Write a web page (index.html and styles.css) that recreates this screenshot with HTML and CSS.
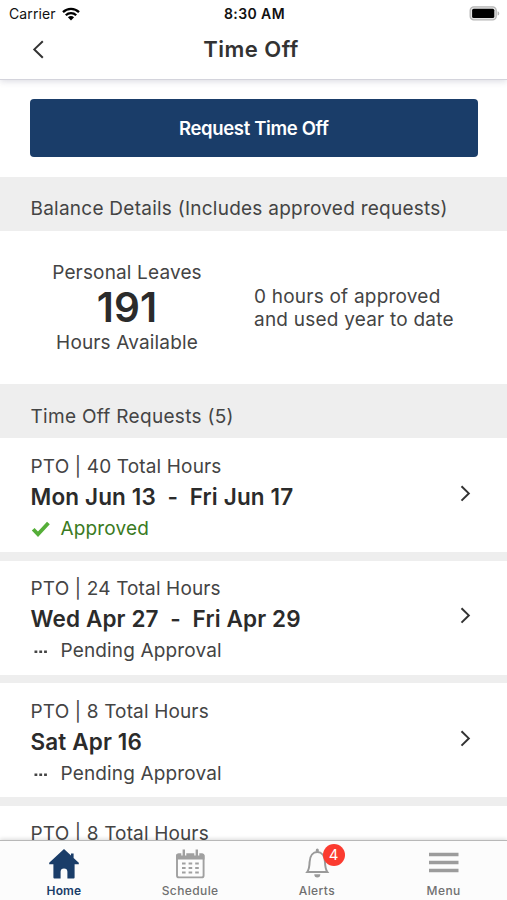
FILE: index.html
```html
<!DOCTYPE html>
<html lang="en">
<head>
    <meta charset="UTF-8">
    <meta name="viewport" content="width=device-width, initial-scale=1.0">
    <title>Time Off</title>
    <link rel="stylesheet" href="styles.css">
</head>
<body>
    <header>
        <div class="status-bar">
            <div class="carrier">
                <span>Carrier</span>
                <svg width="18" height="14" viewBox="0 0 18 14">
                    <path d="M1 5.2a11.5 11.5 0 0 1 16 0M3.8 8.2a7.4 7.4 0 0 1 10.4 0" fill="none" stroke="#000" stroke-width="2.3"/>
                    <path d="M5.9 10.3a4.6 4.6 0 0 1 6.2 0L9 13.6z"/>
                </svg>
            </div>
            <span class="time">8:30 AM</span>
            <svg class="battery" width="31" height="15" viewBox="0 0 31 15">
                <rect x="1.2" y="0.8" width="26" height="13" rx="3.6" fill="#e4e4e4" stroke="#b5b5b5" stroke-width="1.3"/>
                <rect x="3.1" y="2.7" width="22.2" height="9.4" rx="1.6"/>
                <path d="M28.6 5.2v4.4q1.7-.5 1.7-2.2t-1.7-2.2z" fill="#b5b5b5"/>
            </svg>
        </div>
        <div class="title-bar">
            <svg class="back" width="12" height="19" viewBox="0 0 12 19">
                <path d="M10.8 1.2L2.3 9.4l8.5 8.4" fill="none" stroke="#333" stroke-width="2"/>
            </svg>
            <h1>Time Off</h1>
        </div>
    </header>

    <main>
        <div class="actions">
            <button class="request">Request Time Off</button>
        </div>

        <h2>Balance Details (Includes approved requests)</h2>
        <div class="balance">
            <div class="available">
                <p>Personal Leaves</p>
                <strong>191</strong>
                <p>Hours Available</p>
            </div>
            <p class="used">0 hours of approved<br>and used year to date</p>
        </div>

        <h2 class="requests-title">Time Off Requests (5)</h2>
        <div class="item">
            <div>
                <p class="type">PTO | 40 Total Hours</p>
                <p class="dates">Mon Jun 13&nbsp; -&nbsp; Fri Jun 17</p>
                <p class="status approved">
                    <svg width="20" height="16" viewBox="0 0 20 16"><path d="M2.2 8.2l4.8 5L17.4 2" fill="none" stroke="#55ae38" stroke-width="3.8"/></svg>
                    <span>Approved</span>
                </p>
            </div>
            <svg class="arrow" width="11" height="17" viewBox="0 0 11 17"><path d="M1.5 1.2l7.3 7.2-7.3 7.2" fill="none" stroke="#333" stroke-width="2"/></svg>
        </div>
        <div class="item">
            <div>
                <p class="type">PTO | 24 Total Hours</p>
                <p class="dates">Wed Apr 27&nbsp; -&nbsp; Fri Apr 29</p>
                <p class="status">
                    <svg width="20" height="16" viewBox="0 0 20 16"><path d="M3.500 7.500h2.800v2.600H3.500zm4.800 0h2.800v2.600H8.300zm4.800 0h2.800v2.600h-2.800z" fill="#444"/></svg>
                    <span>Pending Approval</span>
                </p>
            </div>
            <svg class="arrow" width="11" height="17" viewBox="0 0 11 17"><path d="M1.5 1.2l7.3 7.2-7.3 7.2" fill="none" stroke="#333" stroke-width="2"/></svg>
        </div>
        <div class="item">
            <div>
                <p class="type">PTO | 8 Total Hours</p>
                <p class="dates">Sat Apr 16</p>
                <p class="status">
                    <svg width="20" height="16" viewBox="0 0 20 16"><path d="M3.500 7.500h2.800v2.600H3.500zm4.800 0h2.800v2.600H8.300zm4.800 0h2.800v2.600h-2.800z" fill="#444"/></svg>
                    <span>Pending Approval</span>
                </p>
            </div>
            <svg class="arrow" width="11" height="17" viewBox="0 0 11 17"><path d="M1.5 1.2l7.3 7.2-7.3 7.2" fill="none" stroke="#333" stroke-width="2"/></svg>
        </div>
        <div class="item">
            <p class="type">PTO | 8 Total Hours</p>
        </div>
    </main>

    <nav>
        <a class="tab active">
            <svg width="32" height="32" viewBox="0 0 32 32">
                <path d="M16 1L1.200 14.800V16.200h4.200v13.300q0 1 1 1h6.200v-6.700a3.400 3.400 0 0 1 6.800 0v6.700h6.200q1 0 1-1V16.200h4.200v-1.400l-5.200-4.800V5.500h-2.600v2.100z" fill="#1a3d69"/>
            </svg>
            <span>Home</span>
        </a>
        <a class="tab">
            <svg width="32" height="32" viewBox="0 0 32 32">
                <rect x="3" y="6.5" width="26.600" height="22.900" rx="2" fill="#fcfcfc" stroke="#a0a0a0" stroke-width="1.900"/>
                <path d="M2.100 11.500V7.500q0-2 2-2h24.400q2 0 2 2v4z" fill="#a0a0a0"/>
                <path d="M9.800 1v6.500M22.800 1v6.500" stroke="#fcfcfc" stroke-width="5"/>
                <path d="M9.800 1.500v6.500M22.800 1.500v6.500" stroke="#a0a0a0" stroke-width="2.400"/>
                <path d="M8 15.500h17M8 20h17M8 24.500h17" stroke="#a0a0a0" stroke-width="2.200" stroke-dasharray="3.600 3"/>
            </svg>
            <span>Schedule</span>
        </a>
        <a class="tab">
            <svg width="32" height="32" viewBox="0 0 32 32">
                <path d="M6.200 24h20.200q-2.200-3-2.400-10C23.700 7.500 20.500 4 16.300 4S8.900 7.500 8.600 14q-.200 7-2.400 10z" fill="#fcfcfc" stroke="#9a9a9a" stroke-width="2"/>
                <path d="M14.800 3.800V2a1.500 1.500 0 0 1 3 0v1.800zM13.300 26.200h6q0 3.200-3 3.200t-3-3.200z" fill="#9a9a9a"/>
            </svg>
            <span>Alerts</span>
            <b class="badge">4</b>
        </a>
        <a class="tab">
            <svg width="32" height="32" viewBox="0 0 32 32">
                <path d="M1 6.500h29.500M1 14.500h29.500M1 22.500h29.500" stroke="#9c9c9c" stroke-width="3.600"/>
            </svg>
            <span>Menu</span>
        </a>
    </nav>
</body>
</html>
```

FILE: styles.css
```css
* {
    box-sizing: border-box;
}
body {
    margin: 0;
    height: 900px;
    display: flex;
    flex-direction: column;
    overflow: hidden;
    font-family: Inter, "Liberation Sans", sans-serif;
    font-size: 19px;
    letter-spacing: 0.15px;
    color: #444;
    background: #fff;
}
h1, h2, p {
    margin: 0;
    font-weight: 400;
    white-space: nowrap;
}
svg {
    display: block;
    flex: none;
}
header {
    height: 80px;
    flex: none;
    background: #fff;
    border-bottom: 1px solid #d4d4dc;
    box-shadow: 0 2px 6px rgba(60, 60, 100, 0.16);
    z-index: 1;
}
.status-bar {
    display: grid;
    grid-template-columns: 1fr auto 1fr;
    align-items: center;
    height: 27px;
    padding: 0 7px 0 9px;
    font-size: 14px;
    color: #111;
}
.carrier {
    display: flex;
    align-items: center;
    gap: 6px;
    letter-spacing: 0.1px;
}
.time {
    font-weight: 600;
    letter-spacing: 0.4px;
}
.battery {
    justify-self: end;
}
.title-bar {
    display: grid;
    grid-template-columns: 1fr auto 1fr;
    align-items: center;
    height: 44px;
    padding: 0 37px 0 32px;
}
h1 {
    font-size: 22px;
    line-height: 30px;
    font-weight: 600;
    color: #333;
    letter-spacing: 0.5px;
}
main {
    flex: 1;
    min-height: 0;
    overflow: hidden;
    display: flex;
    flex-direction: column;
    background: #eee;
}
.actions {
    flex: none;
    display: flex;
    height: 97px;
    padding: 18.5px 29.5px 20px 30px;
    background: #fff;
}
.request {
    flex: 1;
    border: none;
    border-radius: 4px;
    background: #1a3d69;
    color: #fff;
    font-family: inherit;
    font-size: 18.5px;
    font-weight: 600;
    letter-spacing: -0.35px;
}
h2 {
    flex: none;
    height: 54px;
    padding: 5px 30px 0 30.5px;
    line-height: 54px;
    font-size: 19px;
    letter-spacing: 0.25px;
}
.requests-title {
    padding-top: 6px;
    letter-spacing: 0.3px;
}
.balance {
    flex: none;
    display: flex;
    align-items: center;
    height: 153px;
    background: #fff;
}
.available {
    width: 254px;
    text-align: center;
}
.available p {
    line-height: 24px;
}
.available strong {
    display: block;
    font-size: 40.5px;
    line-height: 46px;
    font-weight: 600;
    color: #2b2b2b;
}
.used {
    line-height: 23px;
    letter-spacing: 0.22px;
}
.item {
    flex: none;
    display: flex;
    justify-content: space-between;
    align-items: flex-start;
    height: 114px;
    margin-bottom: 8.5px;
    padding: 12.5px 36px 0 30.5px;
    background: #fff;
    line-height: 31px;
}
.arrow {
    margin-top: 34px;
}
.dates {
    font-size: 22.5px;
    line-height: 30px;
    font-weight: 600;
    letter-spacing: 0.14px;
    color: #2b2b2b;
}
.status {
    display: flex;
    align-items: center;
    gap: 10px;
    line-height: 34px;
}
.approved {
    color: #3a7a22;
}
nav {
    flex: none;
    display: grid;
    grid-template-columns: repeat(4, 1fr);
    height: 60px;
    border-top: 1px solid #b8b8b8;
    box-shadow: 0 -1px 4px rgba(0, 0, 0, 0.15);
    background: #fcfcfc;
    z-index: 1;
}
.tab {
    position: relative;
    display: flex;
    flex-direction: column;
    align-items: center;
    padding-top: 7px;
    font-size: 12px;
    font-weight: 500;
    letter-spacing: 0.4px;
    color: #707070;
}
.tab span {
    line-height: 22px;
}
.active {
    padding-left: 1px;
    color: #1a3d69;
    font-weight: 600;
    letter-spacing: 0.1px;
}
.badge {
    position: absolute;
    left: 69px;
    top: 3px;
    width: 22px;
    height: 22px;
    border-radius: 50%;
    background: #fb3b30;
    color: #fff;
    font-size: 15px;
    line-height: 22px;
    font-weight: 400;
    letter-spacing: 0;
    text-align: center;
}
```
